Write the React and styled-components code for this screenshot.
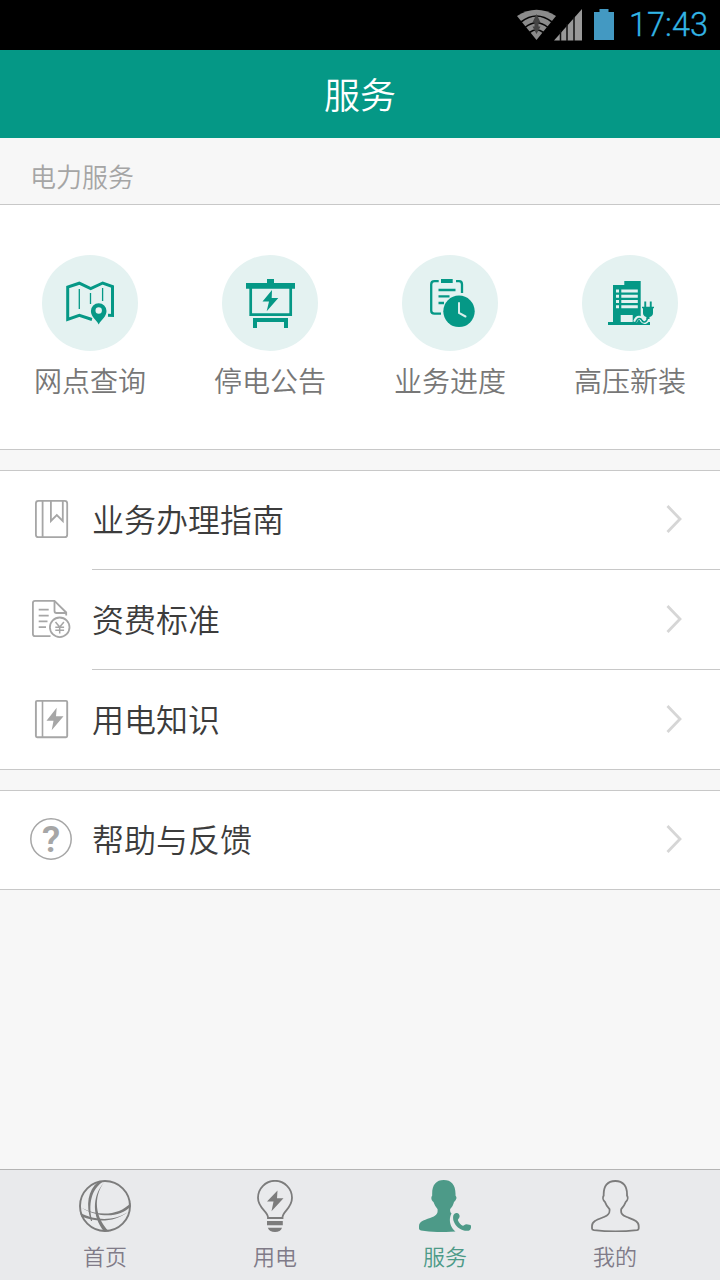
import React from 'react';
import styled, { createGlobalStyle } from 'styled-components';

const GREEN = '#059886';
const PALE = '#e4f2f1';

const GlobalStyle = createGlobalStyle`
  * {
    box-sizing: border-box;
  }

  body {
    margin: 0;
    font-family: 'Noto Sans CJK SC', sans-serif;
    font-weight: 350;
  }

  svg {
    display: block;
    flex-shrink: 0;
  }
`;

const Screen = styled.div`
  display: flex;
  flex-direction: column;
  width: 720px;
  height: 1280px;
  background-color: #f7f7f7;
  overflow: hidden;
`;

const StatusBar = styled.div`
  display: flex;
  align-items: center;
  justify-content: flex-end;
  height: 50px;
  padding-right: 11px;
  background-color: #000;
`;

const Clock = styled.span`
  width: 80px;
  margin-left: 12px;
  padding-right: 1px;
  color: #33b5e5;
  font-family: Roboto, sans-serif;
  font-size: 32.5px;
  font-weight: 300;
  line-height: 48px;
  text-align: right;
  -webkit-text-stroke: 0.3px #33b5e5;
`;

const TitleBar = styled.header`
  display: flex;
  align-items: center;
  justify-content: center;
  height: 88px;
  padding-bottom: 3px;
  background-color: ${GREEN};

  h1 {
    margin: 0;
    color: #fff;
    font-size: 36px;
    font-weight: 350;
    line-height: 52px;
  }
`;

const SectionLabel = styled.div`
  height: 66px;
  padding: 19px 0 0 30px;
  color: #a5a5a5;
  font-size: 26px;
  line-height: 38px;
`;

const Services = styled.div`
  display: grid;
  grid-template-columns: repeat(4, 1fr);
  height: 246px;
  padding-top: 50px;
  background-color: #fff;
  border-top: 1px solid #c8c8c8;
  border-bottom: 1px solid #c8c8c8;
`;

const Service = styled.div`
  display: flex;
  flex-direction: column;
  align-items: center;
  gap: 9px;
  color: #777;
  font-size: 28px;
  line-height: 40px;
`;

const List = styled.div`
  margin-top: 20px;
  background-color: #fff;
  border-top: 1px solid #c8c8c8;
  border-bottom: 1px solid #c8c8c8;
`;

// 100px per row, the list's own borders included
const Row = styled.div`
  display: flex;
  align-items: flex-start;
  height: ${({ $first, $last }) => 100 - ($first ? 1 : 0) - ($last ? 1 : 0)}px;
  padding: ${({ $first }) => ($first ? 0 : 1)}px 0 0 30px;

  > svg {
    margin-top: 27px;
  }
`;

const RowBody = styled.div`
  display: flex;
  align-items: flex-start;
  align-self: stretch;
  justify-content: space-between;
  flex: 1;
  margin-left: 20px;
  padding: 24px 36px 0 0;
  color: #3c3c3c;
  font-size: 32px;
  line-height: 46px;
  border-bottom: ${({ $last }) => ($last ? 'none' : '1px solid #c8c8c8')};

  svg {
    margin-top: 9px;
  }
`;

const TabBar = styled.nav`
  display: grid;
  grid-template-columns: repeat(4, 1fr);
  height: 111px;
  margin-top: auto;
  padding: 10px 20px 0;
  background-color: #e9eaec;
  border-top: 1px solid #b4b4b4;
`;

const Tab = styled.div`
  display: flex;
  flex-direction: column;
  align-items: center;
  gap: 7px;
  color: ${({ $active }) => ($active ? '#4d9a88' : '#807b88')};
  font-size: 22px;
  line-height: 32px;
`;

const StatusIcons = () => (
  <svg width="100" height="50" viewBox="0 0 100 50">
    <path d="M19.5 40 L0 16 Q19.5 3.5 39 16 Z" fill="#8b8b8b" />
    <g fill="none" stroke="#050505" strokeWidth="1.6">
      <path d="M4 22 Q19.5 10 35 22" />
      <path d="M8 27.5 Q19.5 18 31 27.5" />
      <path d="M12.5 32.5 Q19.5 27 26.5 32.5" />
    </g>
    <path d="M19.5 14 L23.5 22.5 H21.5 V26.5 H23.5 L19.5 34 L15.5 26.5 H17.5 V22.5 H15.5 Z" fill="#444" />
    <path d="M37 40.5 L65 9 V40.5 Z" fill="#999" />
    <path d="M43.5 30 V41 M50 24 V41 M57 17 V41" stroke="#111" strokeWidth="1.5" />
    <path d="M77 12 H82.5 V9 H91.5 V12 H97 V40 H77 Z" fill="#4399c2" />
  </svg>
);

const MapIcon = () => (
  <>
    <path
      d="M50 64.5 L37.3 60.3 L25.7 64.3 V32 L37.3 28.2 L48.7 33.6 L60.7 28 L70.5 31.6 V60.5 L66 60.3"
      fill="none"
      stroke={GREEN}
      strokeWidth="3"
    />
    <path d="M37.3 34 V54 M48.5 38 V49 M60.6 33 V46" stroke={GREEN} strokeWidth="1.3" />
    <path
      d="M56.7 69.5 C54 64 48.9 62 48.9 56 A7.8 7.8 0 0 1 64.5 56 C64.5 62 59.5 64 56.7 69.5 Z"
      fill={GREEN}
      stroke={PALE}
      strokeWidth="2.5"
      paintOrder="stroke"
    />
    <circle cx="56.7" cy="55.5" r="3.2" fill={PALE} />
  </>
);

const BoardIcon = () => (
  <g fill={GREEN}>
    <path d="M45 24 H52 V28 H73 V33.7 H24 V28 H45 Z" />
    <path d="M28.7 33 V59.7 H68.7 V33" fill="none" stroke={GREEN} strokeWidth="2.7" />
    <path d="M31 63 H66 V73 H62 V67 H35 V73 H31 Z" />
    <path d="M50 35 L40.5 46.6 H47 L44.7 56.3 L56.3 43 H49.7 Z" />
  </g>
);

const ProgressIcon = () => (
  <>
    <g fill="none" stroke={GREEN} strokeWidth="2.3">
      <path d="M36.7 26.2 H32.5 Q29.2 26.2 29.2 29.5 V55.5 Q29.2 58.7 32.5 58.7 H39" />
      <path d="M54 26.2 H57 Q60 26.2 60 29.5 V38" />
      <path d="M36.5 35 H53.5 M36.5 41.3 H47.5 M36.5 48 H42" />
    </g>
    <path d="M39 24 H50.7 V28 H39 Z" fill={GREEN} />
    <circle cx="57" cy="56.3" r="15.7" fill={GREEN} />
    <path d="M57 48 V58 L63.5 61.5" fill="none" stroke="#d9eeeb" strokeWidth="2" strokeLinecap="round" />
  </>
);

const BuildingIcon = () => (
  <>
    <path d="M31 30 H42.3 V26 H58.7 V67 H68 V70 H26 V67 H31 Z" fill={GREEN} />
    <path
      d="M34 34.5h3v3h-3z M39.3 34.5h16.5v3h-16.5z M34 39.7h3v3h-3z M39.3 39.7h16.5v3h-16.5z M34 45h3v3h-3z M39.3 45h16.5v3h-16.5z M34 50.2h3v3h-3z M39.3 50.2h16.5v3h-16.5z M38.7 60 H50.7 V67 H38.7 Z"
      fill={PALE}
    />
    <path d="M53 67 C55.5 60.5 59 63 60 65 C61.5 68 65 68 65.5 63" fill="none" stroke={PALE} strokeWidth="4" />
    <path d="M53.5 68 C56 61.5 59 63.5 60 65.5 C61.5 68 65 67.5 65.7 62" fill="none" stroke={GREEN} strokeWidth="1.6" />
    <path
      d="M62.3 46.5 H64.2 V51.7 H67.8 V46.5 H69.7 V51.7 H72 V53.3 H71 V58 Q71 61 67.5 62 V64 H64.5 V62 Q61 61 61 58 V53.3 H60 V51.7 H62.3 Z"
      fill={GREEN}
    />
  </>
);

const GuideIcon = () => (
  <g fill="none" stroke="#a6a6a6" strokeWidth="1.8">
    <rect x="5.9" y="2.9" width="31.3" height="36.3" rx="2.5" />
    <path d="M12.6 3 V39 M20.9 3 V23 L26.8 17 L32.8 23 V3" />
  </g>
);

const FeeIcon = () => (
  <g fill="none" stroke="#a6a6a6" strokeWidth="1.8">
    <path d="M20.5 38.2 H5 Q2.9 38.2 2.9 36 V5 Q2.9 2.9 5 2.9 H24.5 L36.2 14.5 V17.5" />
    <path d="M24.5 3 V13 Q24.5 15 26.5 15 H36" />
    <path d="M8.7 11.7 H18.7 M8.7 17.7 H18.7 M8.7 23.3 H17.5 M8.7 29.2 H16" />
    <circle cx="29.7" cy="29.3" r="9.8" />
    <path d="M25.5 24 L29.7 29 L33.9 24 M29.7 29 V35.5 M25.3 29.2 H34.1 M25.3 32.3 H34.1" strokeWidth="1.5" />
  </g>
);

const KnowledgeIcon = () => (
  <>
    <g fill="none" stroke="#a6a6a6" strokeWidth="1.9">
      <rect x="5.9" y="2.9" width="31.3" height="36.3" rx="1.2" />
      <path d="M12.5 3 V39" strokeWidth="1.6" />
    </g>
    <path d="M26.7 9.8 L16.5 22.7 H23.5 L21.7 32.3 L33.5 18.3 H26 Z" fill="#a6a6a6" />
  </>
);

const HelpIcon = () => (
  <>
    <circle cx="21" cy="21" r="20.2" fill="none" stroke="#a6a6a6" strokeWidth="1.5" />
    <text x="21" y="34" textAnchor="middle" fill="#a6a6a6" fontFamily="Roboto, sans-serif" fontSize="37" fontWeight="600">
      ?
    </text>
  </>
);

const Chevron = () => (
  <svg width="18" height="30" viewBox="0 0 18 30">
    <path d="M1.5 2 L14 15 L1.5 28" fill="none" stroke="#d6d6d6" strokeWidth="2.8" />
  </svg>
);

const HomeIcon = () => (
  <>
    <circle cx="26" cy="26" r="25" fill="none" stroke="#7c7c7c" strokeWidth="1.9" />
    <g fill="#7c7c7c">
      <path d="M19 2 C9 10 6.5 25 12 41 L13.2 41 C9 25 12 9 25 0.8 Z" />
      <path d="M24.5 3 C13 17 13 36 25 51.5 L30 51.5 C15.5 37 14.5 17 24.5 3 Z" />
      <path d="M51.5 23 C41 35 20 37 3 28 C20 38.5 42 37.5 51.5 26.5 Z" />
      <path d="M1 33 C18 41.5 36 40.5 49 32 C36 42 18 43 2.5 36.5 Z" />
    </g>
  </>
);

const BulbIcon = () => (
  <>
    <path
      d="M19 38 H33.5 C33 31 43 29 43 17.8 A17 17 0 0 0 9 17.8 C9 29 19.5 31 19 38 Z"
      fill="none"
      stroke="#7c7c7c"
      strokeWidth="1.8"
    />
    <path d="M18 41 H33.8 V45.3 H18 Z M18.8 47.7 H33 Q31.5 52 26 52 Q20.5 52 18.8 47.7 Z" fill="#7c7c7c" />
    <path d="M28.5 10.5 L18 21.5 H24.5 L22.5 31.3 L34.5 18.3 H28 Z" fill="#7c7c7c" />
  </>
);

const AgentIcon = () => (
  <g fill="#4d9a88">
    <path d="M24.8 0 C17 0 12.7 5 13.2 15.5 C11.5 17.5 12.5 20.5 14.5 22 C15.5 25 17 27 18.5 29 C19 33 18 35 13.5 37 C7 39.5 0 41 0 46 V48.5 Q0 50 2 50.5 Q17 53 36.5 51.5 C31.5 47.5 29 40 32.5 33.5 C31 32 31 30.5 31.2 29 C33 27 34.3 25 35 22 C37.5 20 38.3 17.5 36.5 15.5 C37 5 32.5 0 24.8 0 Z" />
    <path d="M37 33 C39.5 32.5 41 34.5 40.5 37 C40 39 38.5 39 39 40.5 C40 43 42 45 43.8 45.8 C45 46 45.5 44.3 47.5 44.3 L51.5 45 Q52.8 47 51 50 C49 51.5 44 51 40.5 48.5 C35.5 45 33 39.5 34.5 35 Q35.3 33.3 37 33 Z" />
  </g>
);

const MeIcon = () => (
  <path
    d="M26.3 1 C18.5 1 14.3 6 14.7 15.5 C13.5 17.5 14 20.5 16 22 C17 25 18.5 27 20.5 29.2 C21 33 20 35 15 37 C8.5 39.5 3 41 3 46 V48.5 Q3 49.8 5 50.2 Q26 52.6 48 50.2 Q49.7 49.8 49.7 48.5 V46 C49.7 41 44 39.5 37.7 37 C32.5 35 31.7 33 32.2 29.2 C34 27 35.7 25 36.7 22 C38.7 20.5 39.2 17.5 38 15.5 C38.4 6 34 1 26.3 1 Z"
    fill="none"
    stroke="#7c7c7c"
    strokeWidth="1.8"
  />
);

const services = [
  { name: '网点查询', Icon: MapIcon },
  { name: '停电公告', Icon: BoardIcon },
  { name: '业务进度', Icon: ProgressIcon },
  { name: '高压新装', Icon: BuildingIcon }
];

const lists = [
  [
    { name: '业务办理指南', Icon: GuideIcon },
    { name: '资费标准', Icon: FeeIcon },
    { name: '用电知识', Icon: KnowledgeIcon }
  ],
  [{ name: '帮助与反馈', Icon: HelpIcon }]
];

const tabs = [
  { name: '首页', Icon: HomeIcon },
  { name: '用电', Icon: BulbIcon },
  { name: '服务', Icon: AgentIcon, active: true },
  { name: '我的', Icon: MeIcon }
];

export default function App() {
  return (
    <Screen>
      <GlobalStyle />
      <StatusBar>
        <StatusIcons />
        <Clock>17:43</Clock>
      </StatusBar>

      <TitleBar>
        <h1>服务</h1>
      </TitleBar>

      <SectionLabel>电力服务</SectionLabel>
      <Services>
        {services.map(({ name, Icon }) => (
          <Service key={name}>
            <svg width="96" height="96" viewBox="0 0 96 96">
              <circle cx="48" cy="48" r="48" fill={PALE} />
              <Icon />
            </svg>
            <span>{name}</span>
          </Service>
        ))}
      </Services>

      {lists.map((rows) => (
        <List key={rows[0].name}>
          {rows.map(({ name, Icon }, i) => {
            const last = i === rows.length - 1;
            return (
              <Row key={name} $first={i === 0} $last={last}>
                <svg width="42" height="42" viewBox="0 0 42 42">
                  <Icon />
                </svg>
                <RowBody $last={last}>
                  <span>{name}</span>
                  <Chevron />
                </RowBody>
              </Row>
            );
          })}
        </List>
      ))}

      <TabBar>
        {tabs.map(({ name, Icon, active }) => (
          <Tab key={name} $active={active}>
            <svg width="52" height="52" viewBox="0 0 52 52">
              <Icon />
            </svg>
            <span>{name}</span>
          </Tab>
        ))}
      </TabBar>
    </Screen>
  );
}
